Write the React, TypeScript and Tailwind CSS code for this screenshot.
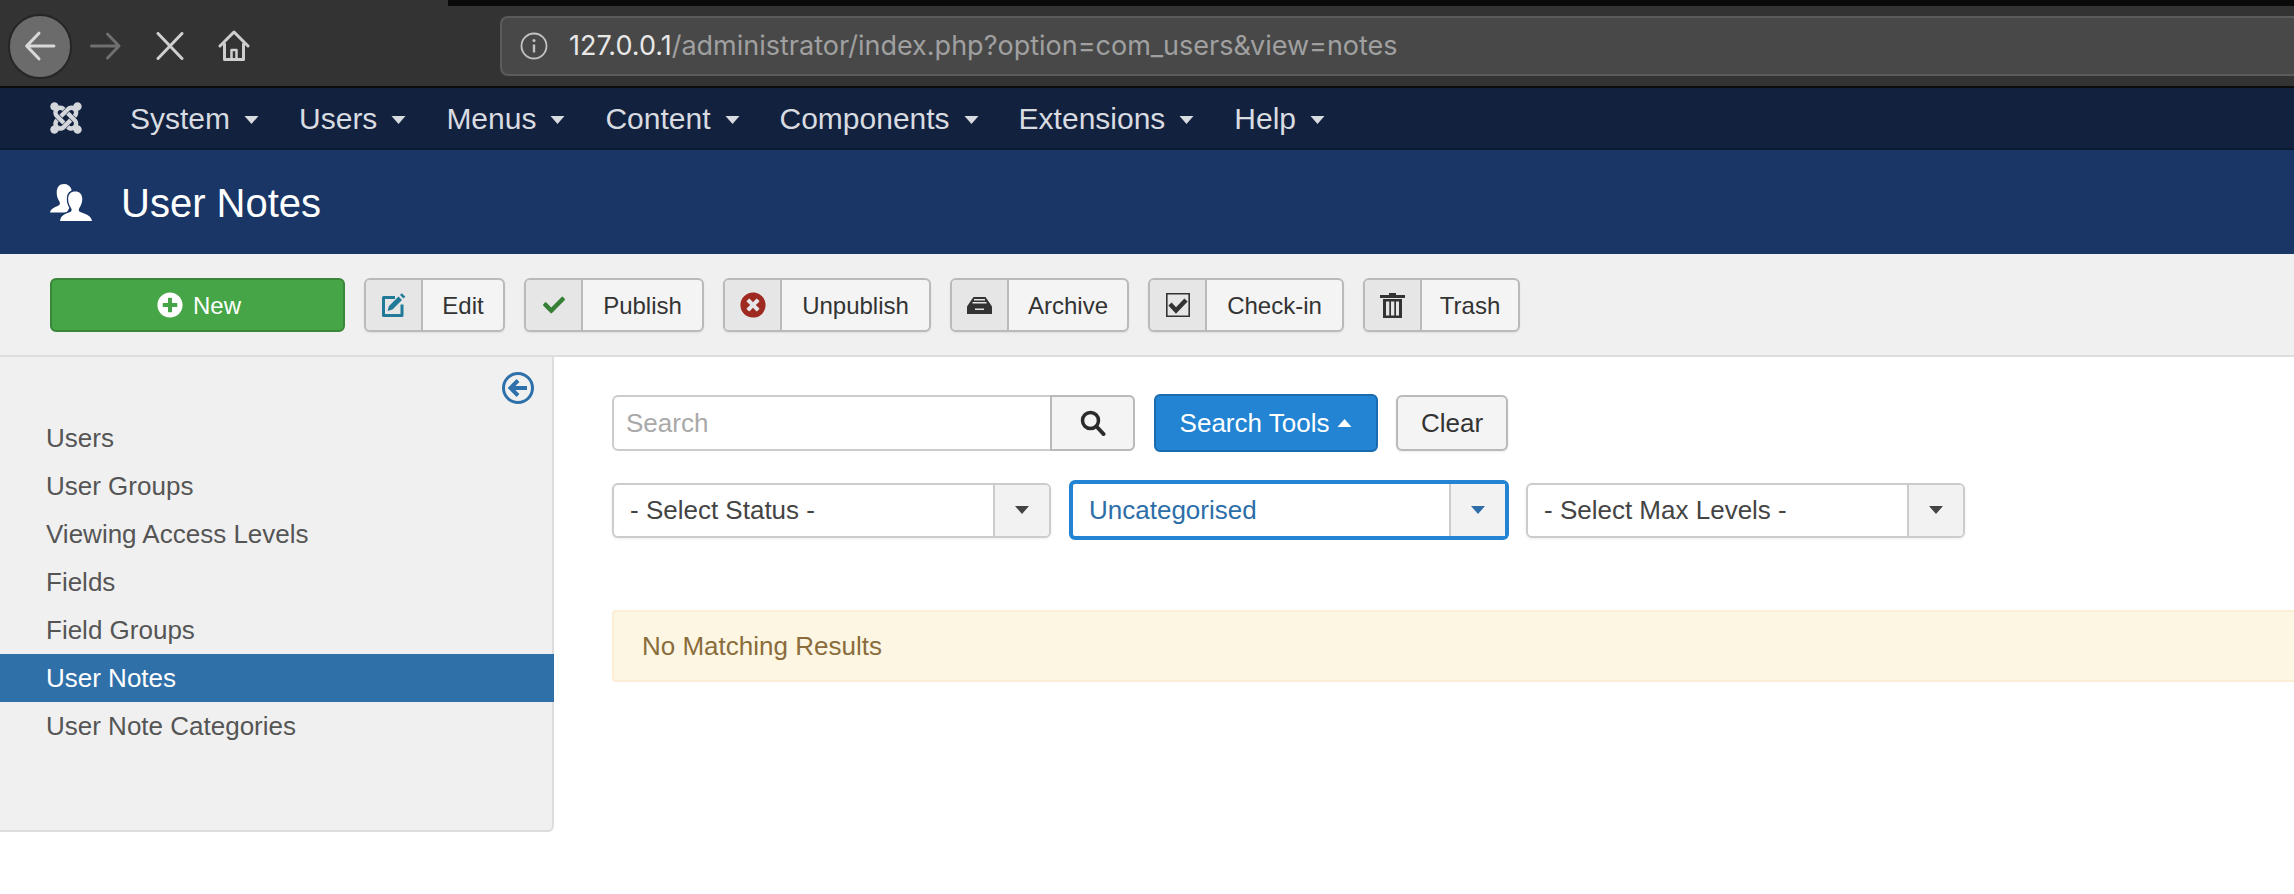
import type { ReactNode } from "react";
import { FaJoomla, FaCheck, FaTimesCircle, FaPlusCircle } from "react-icons/fa";

const navItems = ["System", "Users", "Menus", "Content", "Components", "Extensions", "Help"];
const sideItems = ["Users", "User Groups", "Viewing Access Levels", "Fields", "Field Groups", "User Notes", "User Note Categories"];

function Caret({ className }: { className: string }) {
  return (
    <svg viewBox="0 0 14 8" className={className} fill="currentColor">
      <path d="M0 0h14L7 8z" />
    </svg>
  );
}

function ToolButton({ icon, label, size }: { icon: ReactNode; label: string; size: string }) {
  return (
    <button className={`flex h-[54px] items-stretch rounded-[6px] border-2 border-[#bababa] bg-[#f4f4f4] text-[24px] text-[#333] shadow-[0_1px_2px_rgba(0,0,0,0.08)] ${size}`}>
      <span className="flex w-[57px] items-center justify-center rounded-l-[4px] border-r-2 border-[#bababa] bg-[#e6e6e6]">{icon}</span>
      <span className="flex flex-1 items-center justify-center pt-[2px]">{label}</span>
    </button>
  );
}

function SelectBox({ label, width, arrow, active }: { label: string; width: string; arrow: string; active?: boolean }) {
  return (
    <div className={`flex items-stretch bg-white text-[26px] ${width} ${active ? "h-[60px] rounded-[6px] border-4 border-[#2384d3] text-[#2d6ea8]" : "h-[55px] rounded-[6px] border-2 border-[#cccccc] text-[#444] shadow-[0_1px_3px_rgba(0,0,0,0.08)]"}`}>
      <span className="flex flex-1 items-center pl-[16px]">{label}</span>
      <span className={`flex w-[56px] items-center justify-center border-l-2 border-[#cccccc] bg-[#f2f2f2] ${active ? "" : "rounded-r-[4px]"}`}>
        <Caret className={`h-[8px] w-[14px] ${arrow}`} />
      </span>
    </div>
  );
}

export default function App() {
  return (
    <div className="h-[894px] w-full overflow-hidden bg-white font-['Liberation_Sans',Arial,sans-serif]">
      {/* browser chrome */}
      <div className="relative flex h-[88px] items-center border-b-2 border-[#0c0c0c] bg-[#333333] pt-[6px]">
        <div className="absolute right-0 top-0 h-[6px] w-[calc(100%-448px)] bg-[#0a0a0a]" />
        <div className="ml-[8px] flex h-[65px] w-[64px] items-center justify-center rounded-full border-2 border-[#262626] bg-[#6b6b6b]">
          <svg viewBox="0 0 32 32" className="h-[34px] w-[34px]" fill="none" stroke="#d8d8d8" strokeWidth="3" strokeLinecap="round" strokeLinejoin="round">
            <path d="M29 16H4M15 4L3.5 16 15 28" />
          </svg>
        </div>
        <svg viewBox="0 0 32 32" className="ml-[17px] h-[32px] w-[33px]" fill="none" stroke="#6f6f6f" strokeWidth="3" strokeLinecap="round" strokeLinejoin="round">
          <path d="M2 16h27M18 4l11.5 12L18 28" />
        </svg>
        <svg viewBox="0 0 28 28" className="ml-[34px] h-[28px] w-[28px]" fill="none" stroke="#cfcfcf" strokeWidth="3" strokeLinecap="round">
          <path d="M2 1.500L26 26.500M26 1.500L2 26.500" />
        </svg>
        <svg viewBox="0 0 32 32" className="ml-[34px] h-[32px] w-[32px]" fill="none" stroke="#cfcfcf" strokeWidth="3" strokeLinejoin="round" strokeLinecap="round">
          <path d="M2 16L16 2l14 14" />
          <path d="M6.500 14v15.500h19V14" />
          <path d="M13.500 29v-9h5v9" strokeWidth="2.500" />
        </svg>
        <div className="ml-[250px] flex h-[60px] flex-1 items-center rounded-l-[8px] border-2 border-r-0 border-[#5b5b5b] bg-[#484848] pl-[18px]">
          <svg viewBox="0 0 28 28" className="h-[28px] w-[28px]" fill="none" stroke="#c2c2c2" strokeWidth="1.800">
            <circle cx="14" cy="14" r="12.500" />
            <path d="M14 12.500v8" strokeWidth="2.400" />
            <circle cx="14" cy="8.500" r="1.500" fill="#c2c2c2" stroke="none" />
          </svg>
          <span className="ml-[21px] whitespace-nowrap font-['Inter',sans-serif] text-[27px] text-[#e8e8e8]">
            127.0.0.1<span className="text-[#a0a0a0]">/administrator/index.php?option=com_users&amp;view=notes</span>
          </span>
        </div>
      </div>

      {/* joomla nav */}
      <div className="flex h-[62px] items-center border-b-2 border-[#0b1a33] bg-[#11213e] pl-[48px] text-[30px] text-[#d8dbe0]">
        <FaJoomla className="mr-[46px] h-[36px] w-[36px] text-[#d3d6db]" />
        {navItems.map((item) => (
          <div key={item} className="mr-[40px] flex items-center">
            <span>{item}</span>
            <Caret className="ml-[14px] mt-[3px] h-[8px] w-[15px] text-[#d8dbe0]" />
          </div>
        ))}
      </div>

      {/* page title */}
      <div className="flex h-[104px] items-center bg-[#193666] pl-[50px] text-white">
        <svg viewBox="0 0 125 110" className="h-[37px] w-[42px]" fill="#ffffff">
          <path d="M0 85C2 75 12 70 24 65C30 62 31 58 28 52C23 45 20 36 20 26C20 10 28 0 42 0C52 0 60 6 64 16L64 60L50 85Z" />
          <path
            d="M30 110C31 95 42 90 58 84C64 82 66 78 63 72C57 64 54 55 54 44C54 30 62 22 75 22C88 22 96 30 96 44C96 55 93 64 87 72C84 78 86 82 92 84C108 90 123 95 125 110Z"
            stroke="#193666"
            strokeWidth="8"
            paintOrder="stroke"
          />
        </svg>
        <h1 className="ml-[29px] pt-[2px] text-[40px] font-normal">User Notes</h1>
      </div>

      {/* toolbar */}
      <div className="flex h-[103px] items-start gap-[19px] border-b-2 border-[#dddddd] bg-[#f0f0f0] pl-[50px] pt-[24px]">
        <button className="flex h-[54px] w-[295px] items-center justify-center rounded-[6px] border-2 border-[#3a873a] bg-[#46a546] pl-[3px] text-[24px] text-white">
          <FaPlusCircle className="mr-[10px] h-[26px] w-[26px]" />
          <span className="pt-[2px]">New</span>
        </button>
        <ToolButton size="w-[141px]" label="Edit" icon={
          <svg viewBox="0 0 24 24" className="h-[24px] w-[24px]" fill="#217a98">
            <path d="M13 4.500H1.500v18H20V11.500" fill="none" stroke="#217a98" strokeWidth="3" strokeLinejoin="round" />
            <path d="M5.500 18l1.500-5L16.500 3.500l3.500 3.500L10.500 16.500z" />
            <path d="M18 2l1.800-1.800 3.500 3.500L21.500 5.500z" />
          </svg>
        } />
        <ToolButton size="w-[180px]" label="Publish" icon={<FaCheck className="h-[22px] w-[24px] text-[#378137]" />} />
        <ToolButton size="w-[208px]" label="Unpublish" icon={<FaTimesCircle className="h-[26px] w-[26px] text-[#9e2a22]" />} />
        <ToolButton size="w-[179px]" label="Archive" icon={
          <svg viewBox="0 0 25 17" className="h-[17px] w-[25px]">
            <path d="M6.500 0h12L25 9.500V17H0V9.500z" fill="#333333" />
            <path d="M7 2h11v1.500H7zM5.500 5h14v1.500h-14zM8 11.500h9V13H8z" fill="#e6e6e6" />
          </svg>
        } />
        <ToolButton size="w-[196px]" label="Check-in" icon={
          <svg viewBox="0 0 24 24" className="h-[24px] w-[24px]" fill="none">
            <path d="M.8.8h22.400v22.400H.8z" stroke="#333333" strokeWidth="1.600" />
            <path d="M4 11l6 6.500L20 7" stroke="#333333" strokeWidth="4.500" />
          </svg>
        } />
        <ToolButton size="w-[157px]" label="Trash" icon={
          <svg viewBox="0 0 25 25" className="h-[25px] w-[25px]" fill="#333333">
            <path d="M9 0h7v2H9zM0 2h25v3H0z" />
            <path d="M3 6h19v19H3zM6 8.500v14h3.300v-14zM11 8.500v14h3.300v-14zM16 8.500v14h3v-14z" fillRule="evenodd" />
          </svg>
        } />
      </div>

      <div className="flex items-start">
        {/* sidebar */}
        <div className="h-[475px] w-[554px] shrink-0 rounded-br-[6px] border-b-2 border-r-2 border-[#dddddd] bg-[#f0f0f0] pt-[15px]">
          <div className="flex justify-end pr-[18px]">
            <svg viewBox="0 0 32 32" className="h-[32px] w-[32px]" fill="none" stroke="#2e71aa">
              <circle cx="16" cy="16" r="14.500" strokeWidth="3" />
              <path d="M25 16H9M16 8.500L8.500 16l7.500 7.500" strokeWidth="4" />
            </svg>
          </div>
          <ul className="mt-[10px] text-[26px] text-[#555]">
            {sideItems.map((item) => (
              <li key={item} className={`flex h-[48px] items-center pl-[46px] ${item === "User Notes" ? "-mr-[2px] bg-[#2f70a9] text-white" : ""}`}>
                {item}
              </li>
            ))}
          </ul>
        </div>

        {/* main content */}
        <div className="min-w-0 flex-1 pl-[58px] pt-[37px]">
          <div className="flex h-[58px] items-center">
            <div className="flex h-[56px] w-[523px] rounded-[6px] border-2 border-[#cccccc] bg-white text-[26px]">
              <span className="flex flex-1 items-center pl-[12px] text-[#a9a9a9]">Search</span>
              <span className="-mr-[2px] -my-[2px] flex w-[85px] items-center justify-center rounded-r-[6px] border-2 border-[#bababa] bg-[#f4f4f4]">
                <svg viewBox="0 0 26 26" className="h-[26px] w-[26px]" fill="none" stroke="#2b2b2b" strokeLinecap="round">
                  <circle cx="10.500" cy="10.500" r="8" strokeWidth="3.500" />
                  <path d="M16.500 16.500l7 7.500" strokeWidth="4" />
                </svg>
              </span>
            </div>
            <button className="ml-[19px] flex h-[58px] w-[224px] items-center justify-center rounded-[6px] border-2 border-[#1a6cb0] bg-[#2384d3] text-[26px] text-white">
              Search Tools
              <Caret className="ml-[8px] h-[8px] w-[15px] rotate-180 text-white" />
            </button>
            <button className="ml-[18px] h-[56px] w-[112px] rounded-[6px] border-2 border-[#bababa] bg-[#f4f4f4] text-[26px] text-[#333] shadow-[0_1px_2px_rgba(0,0,0,0.08)]">
              Clear
            </button>
          </div>

          <div className="mt-[28px] flex h-[60px] items-center">
            <SelectBox label="- Select Status -" width="w-[439px]" arrow="text-[#444]" />
            <div className="ml-[18px]">
              <SelectBox label="Uncategorised" width="w-[440px]" arrow="text-[#2d6ea8]" active />
            </div>
            <div className="ml-[17px]">
              <SelectBox label="- Select Max Levels -" width="w-[439px]" arrow="text-[#444]" />
            </div>
          </div>

          <div className="mt-[70px] flex h-[72px] items-center rounded-l-[4px] border-2 border-r-0 border-[#fbeed5] bg-[#fdf6e3] pl-[28px] text-[26px] text-[#8a6d3b]">
            No Matching Results
          </div>
        </div>
      </div>
    </div>
  );
}
